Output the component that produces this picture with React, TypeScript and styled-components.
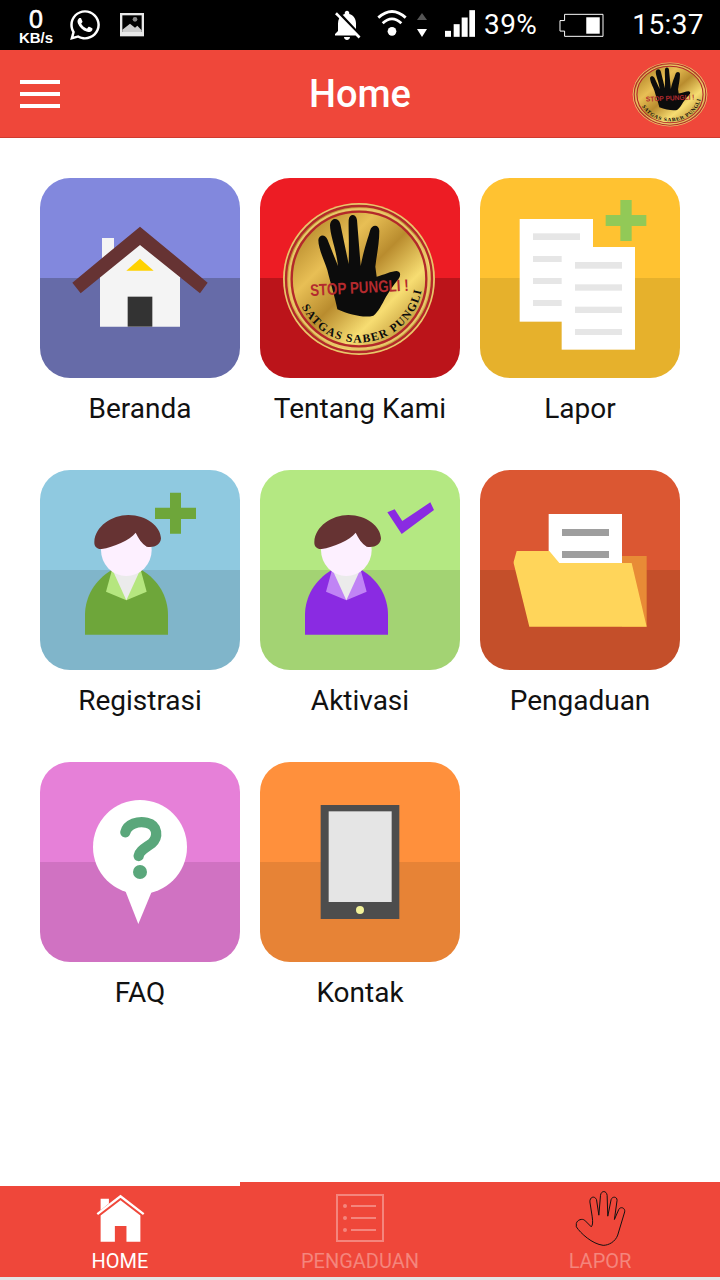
import React, { FC, ReactNode } from 'react';
import styled, { createGlobalStyle } from 'styled-components';
import { FaWhatsapp } from 'react-icons/fa';
import { MdNotificationsOff } from 'react-icons/md';

const RED = '#ef473a';
const FADED = 'rgba(255, 255, 255, 0.34)';

const GlobalStyle = createGlobalStyle`
  html, body {
    margin: 0;
    padding: 0;
    background: #fff;
    font-family: Roboto, "Liberation Sans", sans-serif;
  }
`;

const Page = styled.div`
  width: 720px;
  height: 1280px;
  display: flex;
  flex-direction: column;
  overflow: hidden;
  background: #fff;
`;

const StatusBar = styled.div`
  height: 50px;
  flex: none;
  display: flex;
  align-items: center;
  background: #000;
  color: #fff;
`;

const StatusItem = styled.div<{ $gap: number; $push?: boolean; $lift?: number }>`
  display: flex;
  margin-left: ${(p) => (p.$push ? 'auto' : `${p.$gap}px`)};
  margin-bottom: ${(p) => (p.$lift ?? 0) * 2}px;
`;

const Speed = styled.div`
  width: 36px;
  margin-left: 18px;
  display: flex;
  flex-direction: column;
  align-items: center;
  font-family: "Liberation Sans", sans-serif;
  font-weight: bold;
`;

const SpeedValue = styled.span`
  font-size: 25px;
  line-height: 22px;
  margin-top: 2px;
  font-weight: normal;
  -webkit-text-stroke: 0.6px #fff;
`;

const SpeedUnit = styled.span`
  font-size: 15px;
  line-height: 15px;
`;

const StatusText = styled.span`
  font-size: 28px;
  line-height: 50px;
  letter-spacing: 0.4px;
`;

const TopBar = styled.header`
  height: 88px;
  flex: none;
  box-sizing: border-box;
  display: grid;
  grid-template-columns: 1fr auto 1fr;
  align-items: center;
  padding: 0 12px;
  background: ${RED};
  border-bottom: 1px solid #cf3b2f;
`;

const MenuButton = styled.div`
  width: 40px;
  height: 28px;
  margin-left: 8px;
  display: flex;
  flex-direction: column;
  justify-content: space-between;
  span {
    display: block;
    height: 4px;
    background: #fff;
  }
`;

const Title = styled.h1`
  margin: 0;
  color: #fff;
  font-size: 38px;
  font-weight: 500;
  line-height: 88px;
`;

const LogoSlot = styled.div`
  justify-self: end;
  display: flex;
  svg {
    display: block;
  }
`;

const Main = styled.main`
  flex: 1;
  display: grid;
  grid-template-columns: repeat(3, 200px);
  grid-auto-rows: 292px;
  column-gap: 20px;
  padding: 40px 40px 0;
`;

const Cell = styled.div`
  display: flex;
  flex-direction: column;
  align-items: center;
`;

const Tile = styled.div<{ $top: string; $bottom: string }>`
  width: 200px;
  height: 200px;
  border-radius: 30px;
  overflow: hidden;
  background: linear-gradient(${(p) => p.$top} 50%, ${(p) => p.$bottom} 50%);
  svg {
    display: block;
    width: 200px;
    height: 200px;
  }
`;

const Label = styled.div`
  height: 62px;
  line-height: 62px;
  font-size: 28px;
  color: #111;
`;

const BottomNav = styled.nav`
  height: 98px;
  flex: none;
  display: flex;
  align-items: flex-end;
  background: #fff;
`;

const Tab = styled.div<{ $active?: boolean }>`
  flex: 1;
  height: ${(p) => (p.$active ? 91 : 95)}px;
  margin-bottom: 3px;
  box-sizing: border-box;
  display: flex;
  flex-direction: column;
  align-items: center;
  justify-content: flex-end;
  background: ${RED};
  color: ${(p) => (p.$active ? '#fff' : FADED)};
`;

const TabIcon = styled.div`
  height: 54px;
  margin-bottom: 3px;
  display: flex;
  align-items: center;
  justify-content: center;
  svg {
    display: block;
  }
`;

const TabLabel = styled.span`
  font-size: 20px;
  line-height: 24px;
  height: 28px;
  margin-top: 1px;
`;

const Footer = styled.div`
  height: 3px;
  flex: none;
  margin-top: -3px;
  background: #e4e4e4;
`;

const WifiIcon = () => (
  <svg width="32" height="28" viewBox="45 15 100 90" fill="none" stroke="#fff" strokeWidth="9">
    <path d="M51 46 Q95 6 139 46" />
    <path d="M65 64 Q95 36 125 64" />
    <circle cx="95" cy="90" r="14" fill="#fff" stroke="none" />
  </svg>
);

const ArrowsIcon = () => (
  <svg width="10" height="24" viewBox="0 0 10 24">
    <path d="M5 0 L10 7 L0 7 Z" fill="#555" />
    <path d="M0 16 L10 16 L5 24 Z" fill="#fff" />
  </svg>
);

const SignalIcon = () => (
  <svg width="30" height="27" viewBox="255 33 90 80" fill="#fff">
    <rect x="255" y="95" width="18" height="18" />
    <rect x="281" y="75" width="18" height="38" />
    <rect x="305" y="55" width="18" height="58" />
    <rect x="328" y="33" width="17" height="80" />
  </svg>
);

const BatteryIcon = () => (
  <svg width="45" height="25" viewBox="595 38 137 74">
    <path
      d="M612 41 H729 V108 H612 V92 H598 V60 H612 Z"
      fill="none"
      stroke="#fff"
      strokeWidth="3"
    />
    <rect x="678" y="50" width="41" height="50" fill="#fff" />
  </svg>
);

const GalleryIcon = () => (
  <svg width="24" height="24" viewBox="360 40 72 72">
    <rect x="360" y="40" width="72" height="70" fill="#e8e8e8" />
    <rect x="367" y="47" width="58" height="50" fill="#000" />
    <circle cx="405" cy="59" r="7" fill="#888" />
    <path d="M367 90 L390 72 L405 84 L412 78 L425 92 V97 H367 Z" fill="#ccc" />
  </svg>
);

const Coin: FC<{ gradientId: string }> = ({ gradientId }) => (
  <>
    <defs>
      <linearGradient id={gradientId} x1="0.05" y1="0.1" x2="0.9" y2="0.95">
        <stop offset="0" stopColor="#a87a20" />
        <stop offset="0.3" stopColor="#e8bf55" />
        <stop offset="0.5" stopColor="#b98c2e" />
        <stop offset="0.72" stopColor="#f7dd72" />
        <stop offset="1" stopColor="#a87a20" />
      </linearGradient>
    </defs>
    <circle cx="327" cy="327" r="228" fill="#e9c66a" />
    <circle cx="327" cy="327" r="219" fill={`url(#${gradientId})`} stroke="#b3282a" strokeWidth="7" />
    <circle cx="327" cy="327" r="209" fill="none" stroke="#e9c66a" strokeWidth="6" />
    <circle cx="327" cy="327" r="202" fill="none" stroke="#b3282a" strokeWidth="7" />
    <path
      d="M262 418 C255 380 240 335 232 300 C222 270 205 235 205 210 C207 192 226 192 232 208
         L264 288 C258 235 240 195 240 165 C243 142 266 142 271 162 L296 282
         C298 220 295 180 296 150 C298 130 318 130 321 150 L332 288
         C342 235 354 205 360 182 C365 162 387 162 388 182 C388 220 380 255 376 290 L380 320
         C400 315 425 303 440 303 C454 305 452 318 445 328 C430 345 420 362 408 380
         C395 405 385 425 370 437 C345 445 300 435 262 418 Z"
      fill="#0c0c0c"
    />
    <text
      x="180"
      y="370"
      transform="rotate(-3 327 350)"
      fontFamily="'Liberation Sans', sans-serif"
      fontWeight="bold"
      fontSize="50"
      fill="#b42a2e"
      textLength={296}
      lengthAdjust="spacingAndGlyphs"
    >
      STOP PUNGLI !
    </text>
    <path id={`${gradientId}-arc`} d="M155 410 A191 191 0 0 0 515 360" fill="none" />
    <text fontFamily="'Liberation Serif', serif" fontWeight="bold" fontSize="35" fill="#0c0c0c">
      <textPath href={`#${gradientId}-arc`} textLength={478} lengthAdjust="spacing">
        SATGAS SABER PUNGLI
      </textPath>
    </text>
  </>
);

const HomeArt = () => (
  <svg viewBox="30 24 600 600">
    <rect x="216" y="204" width="36" height="70" fill="#f4f4f4" />
    <path d="M210 470 V290 L330 215 L450 290 V470 Z" fill="#f4f4f4" />
    <path d="M127 338 L330 170 L533 338 L510 370 L330 225 L152 370 Z" fill="#663333" />
    <path d="M330 266 L371 302 H289 Z" fill="#ffd200" />
    <rect x="293" y="380" width="74" height="90" fill="#333" />
  </svg>
);

const AboutArt = () => (
  <svg viewBox="30 24 600 600">
    <Coin gradientId="coin-tile" />
  </svg>
);

const ReportArt = () => (
  <svg viewBox="30 24 600 600">
    <rect x="149" y="147" width="220" height="308" fill="#fff" />
    <rect x="275" y="231" width="220" height="308" fill="#fff" />
    <g fill="#e6e6e6">
      <rect x="189" y="190" width="141" height="20" />
      <rect x="189" y="258" width="86" height="18" />
      <rect x="189" y="324" width="86" height="18" />
      <rect x="189" y="390" width="86" height="18" />
      <rect x="315" y="276" width="141" height="20" />
      <rect x="315" y="343" width="141" height="19" />
      <rect x="315" y="410" width="141" height="19" />
      <rect x="315" y="477" width="141" height="18" />
    </g>
    <path d="M451 90 H485 V135 H529 V168 H485 V213 H451 V168 H407 V135 H451 Z" fill="#92c957" />
  </svg>
);

const Person: FC<{ suit: string; collar: string }> = ({ suit, collar }) => (
  <>
    <path
      d="M165 524 V465 C165 410 195 360 245 330 H335 C385 360 414 410 414 465 V524 Z"
      fill={suit}
    />
    <path d="M245 333 L228 395 L289 421 L350 395 L333 333 Z" fill={collar} />
    <path d="M250 335 L289 421 L328 335 Z" fill="#ebebeb" />
    <ellipse cx="289" cy="270" rx="76" ry="78" fill="#fdf0ff" />
    <path
      d="M193 245 C195 200 245 165 295 165 C350 165 392 200 393 235 C392 255 370 265 350 260
         C335 250 325 235 317 218 C300 240 250 262 215 267 C200 268 192 258 193 245 Z"
      fill="#663333"
    />
  </>
);

const RegisterArt = () => (
  <svg viewBox="30 30 600 600">
    <Person suit="#6ea63a" collar="#b5e67f" />
    <path d="M420 98 H453 V143 H498 V177 H453 V221 H420 V177 H375 V143 H420 Z" fill="#6ea63a" />
  </svg>
);

const ActivateArt = () => (
  <svg viewBox="30 30 600 600">
    <Person suit="#8a2be2" collar="#c084f5" />
    <path d="M412 157 L434 148 L457 183 L541 127 L552 150 L455 222 Z" fill="#8a2be2" />
  </svg>
);

const FolderArt = () => (
  <svg viewBox="30 30 600 600">
    <rect x="456" y="288" width="74" height="212" fill="#e88b36" />
    <rect x="236" y="162" width="220" height="150" fill="#fff" />
    <rect x="276" y="207" width="141" height="21" fill="#9e9e9e" />
    <rect x="276" y="273" width="141" height="21" fill="#9e9e9e" />
    <path d="M140 273 H238 L268 309 H485 L530 500 H178 L131 310 V305 Z" fill="#ffd55a" />
  </svg>
);

const FaqArt = () => (
  <svg viewBox="30 36 600 600">
    <circle cx="330" cy="291" r="141" fill="#fff" />
    <path d="M285 420 L325 522 L365 425 Z" fill="#fff" />
    <path
      d="M286 247 C292 222 325 212 350 218 C385 226 385 262 365 280 C345 295 328 303 326 318"
      fill="none"
      stroke="#5aa77b"
      strokeWidth="31"
      strokeLinecap="round"
    />
    <circle cx="330" cy="366" r="21" fill="#5aa77b" />
  </svg>
);

const ContactArt = () => (
  <svg viewBox="690 36 600 600">
    <rect x="872" y="165" width="236" height="342" fill="#4d4d4d" />
    <rect x="896" y="184" width="189" height="272" fill="#e5e5e5" />
    <circle cx="990" cy="480" r="12" fill="#f2f29a" />
  </svg>
);

const HomeTabIcon = () => (
  <svg width="53" height="53" viewBox="280 65 160 160" fill="#fff">
    <path d="M300 85 H325 V100 L300 120 Z" />
    <path d="M300 215 V136 L360 90 L420 136 V215 H378 V168 H343 V215 Z" />
    <path d="M290 132 L360 78 L430 132" fill="none" stroke="#fff" strokeWidth="7" />
  </svg>
);

const ListTabIcon = () => (
  <svg width="48" height="48" viewBox="0 0 48 48" fill="none" stroke={FADED} strokeWidth="2">
    <rect x="1" y="1" width="46" height="46" />
    <path d="M15 12 H40 M15 24 H40 M15 36 H40" />
    <g fill={FADED} stroke="none">
      <circle cx="9" cy="12" r="2" />
      <circle cx="9" cy="24" r="2" />
      <circle cx="9" cy="36" r="2" />
    </g>
  </svg>
);

const HandTabIcon = () => (
  <svg width="53" height="57" viewBox="640 60 160 170" fill="none" stroke="#111" strokeWidth="3">
    <path
      d="M647 160 C650 148 665 145 672 150 L692 170 C697 165 697 155 695 140 L688 95
         C687 80 702 75 708 88 L715 135 L720 75 C722 60 738 60 740 75 L742 138 L752 88
         C755 78 770 78 770 90 L762 148 L775 118 C780 108 795 112 793 125 L772 195
         C765 215 745 226 728 226 C695 222 660 190 647 170 Z"
    />
  </svg>
);

type MenuEntry = { label: string; top: string; bottom: string; art: ReactNode };

const MENU: MenuEntry[] = [
  { label: 'Beranda', top: '#8288dd', bottom: '#666ba8', art: <HomeArt /> },
  { label: 'Tentang Kami', top: '#ed1c24', bottom: '#bb141a', art: <AboutArt /> },
  { label: 'Lapor', top: '#ffc231', bottom: '#e6b12c', art: <ReportArt /> },
  { label: 'Registrasi', top: '#8fc9e0', bottom: '#80b5ca', art: <RegisterArt /> },
  { label: 'Aktivasi', top: '#b4e882', bottom: '#a3d373', art: <ActivateArt /> },
  { label: 'Pengaduan', top: '#db5732', bottom: '#c44f2a', art: <FolderArt /> },
  { label: 'FAQ', top: '#e680d8', bottom: '#d072c2', art: <FaqArt /> },
  { label: 'Kontak', top: '#ff903c', bottom: '#e78336', art: <ContactArt /> },
];

const App: FC = () => {
  return (
    <Page>
      <GlobalStyle />
      <StatusBar>
        <Speed>
          <SpeedValue>0</SpeedValue>
          <SpeedUnit>KB/s</SpeedUnit>
        </Speed>
        <StatusItem $gap={14}>
          <FaWhatsapp size={34} />
        </StatusItem>
        <StatusItem $gap={18}>
          <GalleryIcon />
        </StatusItem>
        <StatusItem $gap={0} $push>
          <MdNotificationsOff size={36} />
        </StatusItem>
        <StatusItem $gap={11} $lift={3}>
          <WifiIcon />
        </StatusItem>
        <StatusItem $gap={9}>
          <ArrowsIcon />
        </StatusItem>
        <StatusItem $gap={18} $lift={2}>
          <SignalIcon />
        </StatusItem>
        <StatusItem $gap={9}>
          <StatusText>39%</StatusText>
        </StatusItem>
        <StatusItem $gap={22}>
          <BatteryIcon />
        </StatusItem>
        <StatusItem $gap={28}>
          <StatusText>15:37</StatusText>
        </StatusItem>
        <StatusItem $gap={16} />
      </StatusBar>
      <TopBar>
        <MenuButton>
          <span />
          <span />
          <span />
        </MenuButton>
        <Title>Home</Title>
        <LogoSlot>
          <svg width="76" height="65" viewBox="95 95 464 464" preserveAspectRatio="none">
            <Coin gradientId="coin-header" />
          </svg>
        </LogoSlot>
      </TopBar>
      <Main>
        {MENU.map((entry) => (
          <Cell key={entry.label}>
            <Tile $top={entry.top} $bottom={entry.bottom}>
              {entry.art}
            </Tile>
            <Label>{entry.label}</Label>
          </Cell>
        ))}
      </Main>
      <BottomNav>
        <Tab $active>
          <TabIcon>
            <HomeTabIcon />
          </TabIcon>
          <TabLabel>HOME</TabLabel>
        </Tab>
        <Tab>
          <TabIcon>
            <ListTabIcon />
          </TabIcon>
          <TabLabel>PENGADUAN</TabLabel>
        </Tab>
        <Tab>
          <TabIcon>
            <HandTabIcon />
          </TabIcon>
          <TabLabel>LAPOR</TabLabel>
        </Tab>
      </BottomNav>
      <Footer />
    </Page>
  );
};

export default App;
